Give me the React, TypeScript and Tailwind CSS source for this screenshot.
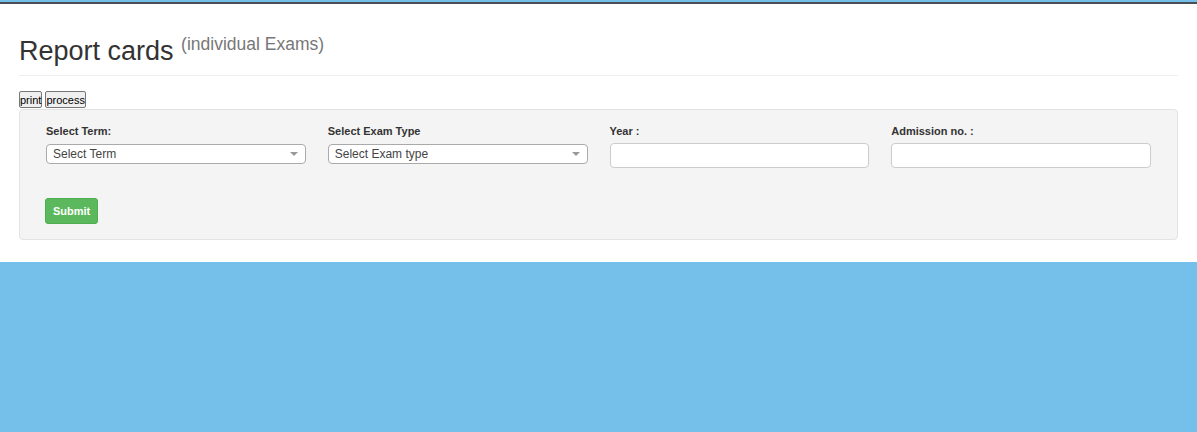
import React from 'react';

function Caret() {
  return (
    <span className="ml-auto h-0 w-0 border-x-[4px] border-t-[4px] border-x-transparent border-t-[#999]" />
  );
}

function SelectBox({ label, text }: { label: string; text: string }) {
  return (
    <div className="px-[11px]">
      <label className="block h-[24px] pt-[15px] text-[11px] font-bold leading-[12px] text-[#333]">{label}</label>
      <div className="mt-[10px] flex h-[20px] items-center rounded-[4px] border border-[#aaa] bg-white pl-[6px] pr-[7px] text-[12px] text-[#444]">
        <span>{text}</span>
        <Caret />
      </div>
    </div>
  );
}

function TextBox({ label }: { label: string }) {
  return (
    <div className="px-[11px]">
      <label className="block h-[24px] pt-[15px] text-[11px] font-bold leading-[12px] text-[#333]">{label}</label>
      <input
        type="text"
        className="mt-[9px] block h-[25px] w-full rounded-[4px] border border-[#ccc] bg-white"
      />
    </div>
  );
}

export default function App() {
  return (
    <div className="flex min-h-[432px] flex-col bg-[#74c0ea] font-['Liberation_Sans',Arial,sans-serif] text-[#333]">
      <div className="h-[2px] bg-[#74c0ea]" />
      <div className="h-[2px] bg-[#4a4f55]" />
      <div className="h-[258px] bg-white px-[19px]">
        <div className="border-b border-[#eee] pt-[32px] pb-[6px]">
          <h1 className="text-[27px] leading-[30px] font-normal text-[#333]">
            Report cards{' '}
            <small className="relative top-[-10px] text-[17.5px] text-[#777]">(individual Exams)</small>
          </h1>
        </div>
        <div className="mt-[15px] flex gap-[3px]">
          <button className="h-[17px] rounded-[2px] border border-[#767676] bg-[#efefef] px-0 text-[11px] leading-[14px] text-black">
            print
          </button>
          <button className="h-[17px] rounded-[2px] border border-[#767676] bg-[#efefef] px-0 text-[11px] leading-[14px] text-black">
            process
          </button>
        </div>
        <div className="mt-[1px] h-[131px] rounded-[4px] border border-[#e3e3e3] bg-[#f4f4f4] px-[15px]">
          <div className="grid grid-cols-4">
            <SelectBox label="Select Term:" text="Select Term" />
            <SelectBox label="Select Exam Type" text="Select Exam type" />
            <TextBox label="Year :" />
            <TextBox label="Admission no. :" />
          </div>
          <div className="px-[10px] pt-[30px]">
            <button className="h-[26px] rounded-[3px] border border-[#4cae4c] bg-[#5cb85c] px-[7px] text-[11px] font-bold text-white">
              Submit
            </button>
          </div>
        </div>
      </div>
      <div className="flex-1 bg-[#74c0ea]" />
    </div>
  );
}
